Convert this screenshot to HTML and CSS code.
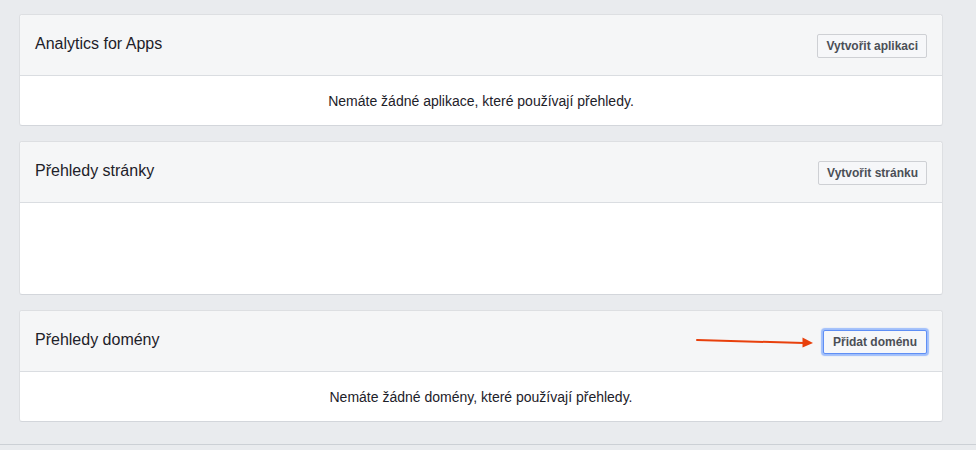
FILE: index.html
```html
<!DOCTYPE html>
<html lang="cs">
<head>
<meta charset="utf-8">
<title>Přehledy</title>
<link rel="stylesheet" href="styles.css">
</head>
<body>
<div class="page">
  <section class="card">
    <div class="card-header">
      <h2 class="card-title">Analytics for Apps</h2>
      <button class="btn">Vytvořit aplikaci</button>
    </div>
    <div class="card-body">Nemáte žádné aplikace, které používají přehledy.</div>
  </section>
  <section class="card">
    <div class="card-header">
      <h2 class="card-title">Přehledy stránky</h2>
      <button class="btn">Vytvořit stránku</button>
    </div>
    <div class="card-body card-body-empty"></div>
  </section>
  <section class="card card-annotated">
    <div class="card-header">
      <h2 class="card-title">Přehledy domény</h2>
      <button class="btn btn-focus">Přidat doménu</button>
    </div>
    <div class="card-body">Nemáte žádné domény, které používají přehledy.</div>
    <svg class="arrow" width="130" height="20" viewBox="0 0 130 20" aria-hidden="true">
      <line x1="7" y1="10" x2="114" y2="13" stroke="#e8400c" stroke-width="2" stroke-linecap="round"/>
      <polygon points="112.5,7.5 123,13 112.5,17.5" fill="#e8400c"/>
    </svg>
  </section>
</div>
<div class="footer-line"></div>
</body>
</html>
```
FILE: styles.css
```css
html, body {
  margin: 0;
  padding: 0;
  background: #e9ebee;
  font-family: "Liberation Sans", Arial, Helvetica, sans-serif;
  color: #1d2129;
}

.page {
  width: 924px;
  margin-left: 19px;
  padding-top: 14px;
  display: flex;
  flex-direction: column;
  gap: 15px;
}

.card {
  background: #fff;
  border: 1px solid #dddfe2;
  border-bottom-color: #d3d6db;
  border-radius: 3px;
  overflow: hidden;
}

.card-annotated {
  position: relative;
  overflow: visible;
}

.card-header {
  height: 60px;
  background: #f5f6f7;
  border-bottom: 1px solid #dadde1;
  display: flex;
  align-items: center;
  justify-content: space-between;
  padding: 0 15px 0 15px;
  border-radius: 3px 3px 0 0;
}

.card-title {
  margin: 0;
  font-size: 16px;
  font-weight: normal;
  color: #1d2129;
  line-height: 20px;
  position: relative;
  top: -1px;
}

.btn {
  height: 24px;
  padding: 0 8px;
  font-family: "Liberation Sans", Arial, Helvetica, sans-serif;
  font-size: 12px;
  font-weight: bold;
  color: #4b4f56;
  background: #f6f7f9;
  border: 1px solid #ced0d4;
  border-radius: 2px;
  line-height: 22px;
  position: relative;
  top: 1px;
}

.btn-focus {
  border-color: #5f8ff5;
  box-shadow: 0 0 1px 2px rgba(88, 144, 255, 0.55);
  margin-right: 0;
  height: 24px;
  padding: 0 9px;
}

.card-body {
  height: 49px;
  display: flex;
  align-items: center;
  justify-content: center;
  font-size: 14px;
  color: #1d2129;
}

.card-body-empty {
  height: 91px;
}

.arrow {
  position: absolute;
  left: 670px;
  top: 19px;
}

.footer-line {
  margin-top: 22px;
  height: 1px;
  background: #ccd0d5;
}
```
